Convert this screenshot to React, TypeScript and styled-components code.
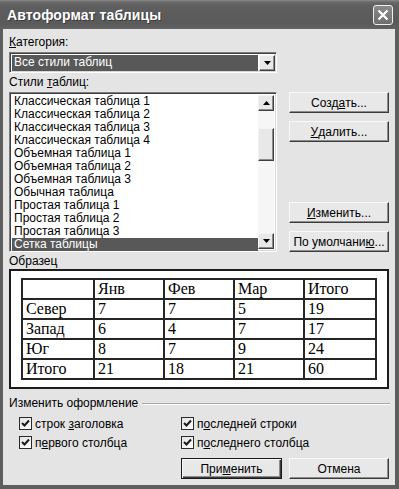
import React from 'react';
import styled, { createGlobalStyle } from 'styled-components';

const Global = createGlobalStyle`
  html, body { margin: 0; padding: 0; background: #e4e4e4; }
  body { font-family: "Liberation Sans", Arial, sans-serif; font-size: 12px; color: #000; }
  * { box-sizing: border-box; }
`;

const Window = styled.div`
  width: 399px;
  height: 489px;
  background: #5e5e5e;
  display: flex;
  flex-direction: column;
`;

const TitleBar = styled.div`
  height: 29px;
  flex: none;
  display: flex;
  align-items: center;
  justify-content: space-between;
  padding: 0 6px 0 7px;
  background: linear-gradient(#8a8a8a 0px, #6a6a6a 2px, #5e5e5e 6px, #5a5a5a 24px, #626262 29px);
`;

const Title = styled.div`
  font-family: "Liberation Sans", Arial, sans-serif;
  font-weight: bold;
  font-size: 14px;
  color: #fff;
  text-shadow: 1px 1px 0 #3a3a3a;
  letter-spacing: 0.1px;
`;

const CloseButton = styled.div`
  width: 20px;
  height: 20px;
  border: 1px solid #f0f0f0;
  border-radius: 3px;
  background: linear-gradient(#8a8a8a, #6e6e6e);
  display: flex;
  align-items: center;
  justify-content: center;
`;

const Body = styled.div`
  flex: 1;
  margin: 0 4px 4px 3px;
  background: #e4e4e4;
  padding: 7px 6px 0 6px;
  display: flex;
  flex-direction: column;
`;

const Label = styled.div<{ $mt?: number }>`
  height: 13px;
  line-height: 13px;
  margin-top: ${p => p.$mt ?? 0}px;
  white-space: nowrap;
`;

const Combo = styled.div`
  margin-top: 3px;
  width: 268px;
  height: 21px;
  display: flex;
  border-style: solid;
  border-width: 1px;
  border-color: #7c7c7c #ffffff #ffffff #7c7c7c;
  box-shadow: inset 1px 1px 0 #404040, inset -1px -1px 0 #d8d8d8;
  background: #fff;
  padding: 2px 1px 1px 2px;
`;

const ComboValue = styled.div`
  flex: 1;
  background: #585858;
  color: #fff;
  line-height: 15px;
  padding-left: 2px;
  margin-right: 1px;
`;

const ArrowButton = styled.div<{ $h?: number }>`
  width: 16px;
  height: ${p => p.$h ?? 16}px;
  flex: none;
  background: #e8e8e8;
  border-style: solid;
  border-width: 1px;
  border-color: #f4f4f4 #404040 #404040 #f4f4f4;
  box-shadow: inset -1px -1px 0 #8c8c8c;
  display: flex;
  align-items: center;
  justify-content: center;
`;

const ListRow = styled.div`
  margin-top: 3px;
  display: flex;
  gap: 12px;
`;

const ListBox = styled.div`
  width: 268px;
  height: 160px;
  border-style: solid;
  border-width: 1px;
  border-color: #7c7c7c #ffffff #ffffff #7c7c7c;
  box-shadow: inset 1px 1px 0 #404040, inset -1px -1px 0 #d8d8d8;
  background: #fff;
  padding: 2px 2px 2px 2px;
  display: flex;
`;

const Items = styled.div`
  flex: 1;
  display: flex;
  flex-direction: column;
`;

const Item = styled.div<{ $selected?: boolean }>`
  height: 13px;
  line-height: 13px;
  padding-left: 2px;
  white-space: nowrap;
  background: ${p => (p.$selected ? '#585858' : 'transparent')};
  color: ${p => (p.$selected ? '#fff' : '#000')};
`;

const ScrollBar = styled.div`
  width: 16px;
  display: flex;
  flex-direction: column;
  background: #f6f6f6;
`;

const Thumb = styled.div`
  margin-top: 17px;
  height: 33px;
  background: #e8e8e8;
  border-style: solid;
  border-width: 1px;
  border-color: #f4f4f4 #404040 #404040 #f4f4f4;
  box-shadow: inset -1px -1px 0 #8c8c8c;
`;

const Spacer = styled.div`
  flex: 1;
`;

const ButtonCol = styled.div`
  width: 100px;
  display: flex;
  flex-direction: column;
  gap: 8px;
`;

const Button = styled.div<{ $default?: boolean; $w?: number }>`
  width: ${p => p.$w ?? 100}px;
  height: 21px;
  flex: none;
  display: flex;
  align-items: center;
  justify-content: center;
  background: #e8e8e8;
  border-style: solid;
  border-width: 1px;
  border-color: ${p => (p.$default ? '#1a1a1a' : '#f8f8f8 #3c3c3c #3c3c3c #f8f8f8')};
  box-shadow: ${p =>
    p.$default
      ? 'inset 1px 1px 0 #f8f8f8, inset -1px -1px 0 #3c3c3c, inset -2px -2px 0 #8c8c8c'
      : 'inset -1px -1px 0 #8c8c8c'};
  white-space: nowrap;
`;

const Preview = styled.div`
  margin-top: 1px;
  height: 120px;
  border: 2px solid #1c1c1c;
  background: #fff;
  display: flex;
  align-items: center;
  justify-content: center;
`;

const Table = styled.table`
  border-collapse: collapse;
  table-layout: fixed;
  width: 355px;
  font-family: "Liberation Serif", "Times New Roman", serif;
  font-size: 16px;
`;

const Cell = styled.td`
  border: 2px solid #262626;
  height: 20px;
  padding: 0 0 0 3px;
  line-height: 16px;
  white-space: nowrap;
`;

const Group = styled.div`
  margin-top: 8px;
  display: flex;
  align-items: center;
  gap: 4px;
`;

const GroupLine = styled.div`
  flex: 1;
  height: 2px;
  border-top: 1px solid #a8a8a8;
  border-bottom: 1px solid #ffffff;
  margin-right: -1px;
`;

const Checks = styled.div`
  margin-top: 7px;
  padding-left: 10px;
  display: grid;
  grid-template-columns: 162px 1fr;
  row-gap: 6px;
`;

const Check = styled.div`
  display: flex;
  align-items: center;
  gap: 3px;
  height: 13px;
  white-space: nowrap;
`;

const Box = styled.div`
  width: 13px;
  height: 13px;
  border: 1px solid #2a2a2a;
  background: linear-gradient(135deg, #e2e2e2, #ffffff);
  display: flex;
  align-items: center;
  justify-content: center;
  flex: none;
`;

const Footer = styled.div`
  margin-top: 9px;
  display: flex;
  justify-content: flex-end;
  gap: 7px;
`;

const U = styled.span`
  text-decoration: underline;
  text-underline-offset: 1px;
`;

const Tri = ({ up }: { up?: boolean }) => (
  <svg width="7" height="4" viewBox="0 0 7 4">
    <path d={up ? 'M0 4 L3.5 0 L7 4 Z' : 'M0 0 L7 0 L3.5 4 Z'} fill="#000" />
  </svg>
);

const Tick = () => (
  <svg width="9" height="9" viewBox="0 0 9 9">
    <path d="M1 4 L3.5 6.5 L8 1.5" stroke="#1a1a1a" strokeWidth="2" fill="none" />
  </svg>
);

const CheckItem = ({ pre, u, post }: { pre: string; u: string; post: string }) => (
  <Check>
    <Box>
      <Tick />
    </Box>
    <span>
      {pre}
      <U>{u}</U>
      {post}
    </span>
  </Check>
);

const styles = [
  'Классическая таблица 1',
  'Классическая таблица 2',
  'Классическая таблица 3',
  'Классическая таблица 4',
  'Объемная таблица 1',
  'Объемная таблица 2',
  'Объемная таблица 3',
  'Обычная таблица',
  'Простая таблица 1',
  'Простая таблица 2',
  'Простая таблица 3',
  'Сетка таблицы',
];

const data = [
  ['', 'Янв', 'Фев', 'Мар', 'Итого'],
  ['Север', '7', '7', '5', '19'],
  ['Запад', '6', '4', '7', '17'],
  ['Юг', '8', '7', '9', '24'],
  ['Итого', '21', '18', '21', '60'],
];

export default function App() {
  return (
    <>
      <Global />
      <Window>
        <TitleBar>
          <Title>Автоформат таблицы</Title>
          <CloseButton>
            <svg width="12" height="12" viewBox="0 0 12 12">
              <path d="M1.5 1.5 L10.5 10.5 M10.5 1.5 L1.5 10.5" stroke="#fff" strokeWidth="2.2" />
            </svg>
          </CloseButton>
        </TitleBar>
        <Body>
          <Label>
            <U>К</U>атегория:
          </Label>
          <Combo>
            <ComboValue>Все стили таблиц</ComboValue>
            <ArrowButton $h={16}>
              <Tri />
            </ArrowButton>
          </Combo>
          <Label $mt={3}>
            Стили <U>т</U>аблиц:
          </Label>
          <ListRow>
            <ListBox>
              <Items>
                {styles.map((s, i) => (
                  <Item key={s} $selected={i === styles.length - 1}>
                    {s}
                  </Item>
                ))}
              </Items>
              <ScrollBar>
                <ArrowButton>
                  <Tri up />
                </ArrowButton>
                <Thumb />
                <Spacer />
                <ArrowButton>
                  <Tri />
                </ArrowButton>
              </ScrollBar>
            </ListBox>
            <ButtonCol>
              <Button>
                Созд<U>а</U>ть...
              </Button>
              <Button>
                <U>У</U>далить...
              </Button>
              <Spacer />
              <Button>
                <U>И</U>зменить...
              </Button>
              <Button>
                По умолчани<U>ю</U>...
              </Button>
            </ButtonCol>
          </ListRow>
          <Label $mt={3}>Образец</Label>
          <Preview>
            <Table>
              <colgroup>
                <col style={{ width: 72 }} />
                <col style={{ width: 70 }} />
                <col style={{ width: 70 }} />
                <col style={{ width: 70 }} />
                <col style={{ width: 72 }} />
              </colgroup>
              <tbody>
                {data.map((row, r) => (
                  <tr key={r}>
                    {row.map((c, j) => (
                      <Cell key={j}>{c}</Cell>
                    ))}
                  </tr>
                ))}
              </tbody>
            </Table>
          </Preview>
          <Group>
            <Label>Изменить оформление</Label>
            <GroupLine />
          </Group>
          <Checks>
            <CheckItem pre="строк " u="з" post="аголовка" />
            <CheckItem pre="п" u="о" post="следней строки" />
            <CheckItem pre="п" u="е" post="рвого столбца" />
            <CheckItem pre="п" u="о" post="следнего столбца" />
          </Checks>
          <Footer>
            <Button $default $w={101}>
              При<U>м</U>енить
            </Button>
            <Button>Отмена</Button>
          </Footer>
        </Body>
      </Window>
    </>
  );
}
